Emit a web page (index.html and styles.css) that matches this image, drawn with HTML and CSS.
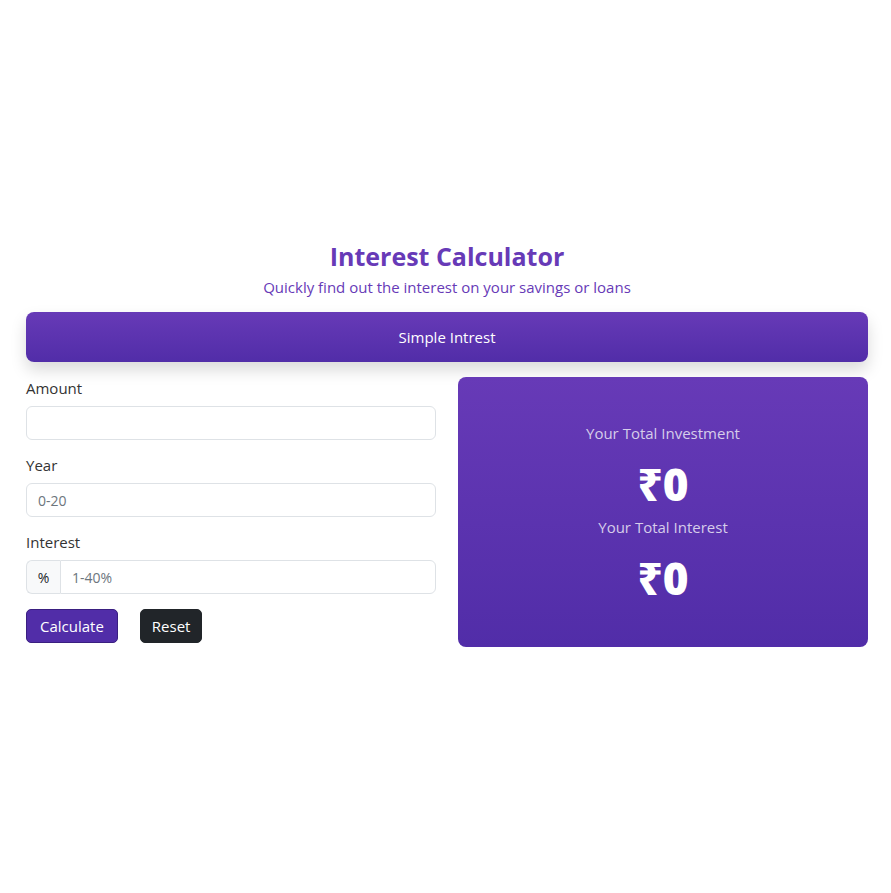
FILE: index.html
```html
<!DOCTYPE html>
<html lang="en">
<head>
<meta charset="utf-8">
<title>Interest Calculator</title>
<link rel="stylesheet" href="styles.css">
</head>
<body>
<main class="page">
  <header class="head">
    <h1 class="title">Interest Calculator</h1>
    <p class="subtitle">Quickly find out the interest on your savings or loans</p>
  </header>
  <div class="banner">Simple Intrest</div>
  <div class="row">
    <form class="form">
      <label class="label" for="amount">Amount</label>
      <input class="input" id="amount" type="text">
      <label class="label" for="year">Year</label>
      <input class="input" id="year" type="text" placeholder="0-20">
      <label class="label" for="rate">Interest</label>
      <div class="group">
        <span class="prefix">%</span>
        <input class="input grouped" id="rate" type="text" placeholder="1-40%">
      </div>
      <div class="actions">
        <button type="button" class="btn calc">Calculate</button>
        <button type="button" class="btn reset">Reset</button>
      </div>
    </form>
    <section class="card">
      <p class="card-label">Your Total Investment</p>
      <p class="card-value">₹0</p>
      <p class="card-label">Your Total Interest</p>
      <p class="card-value">₹0</p>
    </section>
  </div>
</main>
</body>
</html>
```
FILE: styles.css
```css
* { box-sizing: border-box; }
html, body { margin: 0; padding: 0; }
body {
  font-family: "Open Sans", "Noto Sans", sans-serif;
  color: #212529;
  background: #fff;
  min-height: 893px;
  padding-bottom: 3px;
  display: flex;
  align-items: center;
}
.page {
  width: 842px;
  margin-left: 26px;
}
.head { text-align: center; }
.title {
  margin: 0;
  font-size: 25px;
  line-height: 26px;
  font-weight: 700;
  color: #673ab7;
}
.subtitle {
  margin: 7px 0 0;
  font-size: 15px;
  line-height: 22px;
  color: #673ab7;
}
.banner {
  margin-top: 14px;
  height: 50px;
  border-radius: 8px;
  background: linear-gradient(180deg, #673ab7, #512da8);
  color: #fff;
  font-size: 15px;
  display: flex;
  align-items: center;
  justify-content: center;
  box-shadow: 0 8px 16px rgba(0,0,0,0.15);
}
.row {
  margin-top: 15px;
  display: grid;
  grid-template-columns: 1fr 1fr;
  gap: 22px;
  align-items: start;
}
.form { display: flex; flex-direction: column; }
.label {
  font-size: 15px;
  line-height: 22px;
  color: #333;
  margin-bottom: 7px;
}
.input {
  height: 34px;
  width: 100%;
  border: 1px solid #dee2e6;
  border-radius: 6px;
  padding: 0 11px;
  font-family: inherit;
  font-size: 14px;
  color: #212529;
  margin-bottom: 14px;
}
.input::placeholder { color: #6c757d; }
.group {
  display: flex;
  margin-bottom: 15px;
}
.prefix {
  width: 34px;
  height: 34px;
  display: flex;
  align-items: center;
  justify-content: center;
  font-size: 14px;
  background: #f8f9fa;
  border: 1px solid #dee2e6;
  border-right: none;
  border-radius: 6px 0 0 6px;
  color: #212529;
}
.grouped {
  margin-bottom: 0;
  border-radius: 0 6px 6px 0;
  flex: 1;
}
.actions { display: flex; gap: 22px; }
.btn {
  height: 34px;
  padding: 0 13px;
  border-radius: 5px;
  font-family: inherit;
  font-size: 15px;
  color: #fff;
  cursor: pointer;
}
.calc { background: #512da8; border: 1px solid #3a1f80; }
.reset { background: #212529; border: 1px solid #212529; padding: 0 11px; }
.card {
  height: 270px;
  border-radius: 8px;
  background: linear-gradient(180deg, #673ab7, #512da8);
  display: flex;
  flex-direction: column;
  align-items: center;
  justify-content: center;
  text-align: center;
}
.card-label {
  margin: 0 0 15px;
  font-size: 15px;
  line-height: 22px;
  color: #d6cdea;
}
.card-value {
  margin: 0 0 7px;
  font-size: 44px;
  line-height: 50px;
  font-weight: 800;
  color: #fff;
}
.card-value:last-child { margin-bottom: 0; }
```
